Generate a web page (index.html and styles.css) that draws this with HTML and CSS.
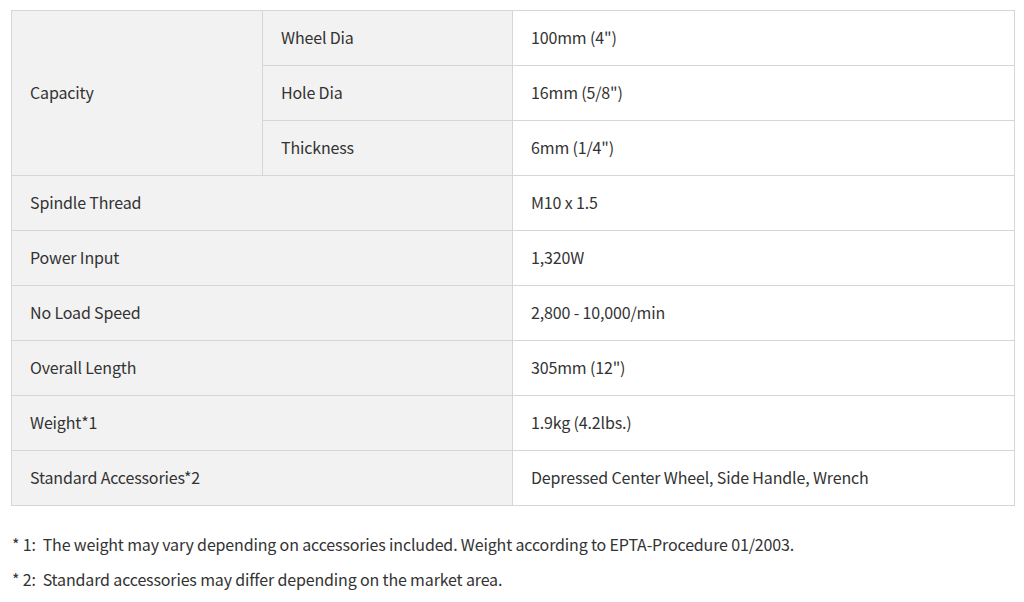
FILE: index.html
```html
<!DOCTYPE html>
<html>
<head>
<meta charset="utf-8">
<link rel="stylesheet" href="styles.css">
</head>
<body>
<div class="wrap">
  <table class="spec">
    <colgroup>
      <col class="c1"><col class="c2"><col class="c3">
    </colgroup>
    <tr>
      <th rowspan="3">Capacity</th>
      <th class="sub">Wheel Dia</th>
      <td>100mm (4")</td>
    </tr>
    <tr>
      <th class="sub">Hole Dia</th>
      <td>16mm (5/8")</td>
    </tr>
    <tr>
      <th class="sub">Thickness</th>
      <td>6mm (1/4")</td>
    </tr>
    <tr><th colspan="2">Spindle Thread</th><td>M10 x 1.5</td></tr>
    <tr><th colspan="2">Power Input</th><td>1,320W</td></tr>
    <tr><th colspan="2">No Load Speed</th><td>2,800 - 10,000/min</td></tr>
    <tr><th colspan="2">Overall Length</th><td>305mm (12")</td></tr>
    <tr><th colspan="2">Weight*1</th><td>1.9kg (4.2lbs.)</td></tr>
    <tr><th colspan="2">Standard Accessories*2</th><td>Depressed Center Wheel, Side Handle, Wrench</td></tr>
  </table>
  <div class="notes">
    <p>* 1:&nbsp; The weight may vary depending on accessories included. Weight according to EPTA-Procedure 01/2003.</p>
    <p>* 2:&nbsp; Standard accessories may differ depending on the market area.</p>
  </div>
</div>
</body>
</html>
```
FILE: styles.css
```css
html, body {
  margin: 0;
  padding: 0;
  background: #fff;
}
body {
  font-family: "Noto Sans CJK KR", "Noto Sans", sans-serif;
  color: #333;
  font-size: 16px;
  letter-spacing: -0.15px;
}
.wrap {
  padding: 10px 9px 0 11px;
}
.spec {
  width: 1004px;
  border-collapse: collapse;
  table-layout: fixed;
  border: 1px solid #d6d6d6;
}
.c1 { width: 251px; }
.c2 { width: 250px; }
.c3 { width: auto; }
.spec th, .spec td {
  border: 1px solid #d6d6d6;
  height: 55px;
  padding: 0 0 2px 18px;
  text-align: left;
  font-weight: 400;
  vertical-align: middle;
  box-sizing: border-box;
  line-height: 20px;
}
.spec th {
  background: #f2f2f2;
}
.spec td {
  background: #fff;
}
.notes {
  padding-top: 26px;
  padding-left: 1px;
}
.notes p {
  margin: 0 0 11px;
  line-height: 24px;
  color: #333;
}
```
